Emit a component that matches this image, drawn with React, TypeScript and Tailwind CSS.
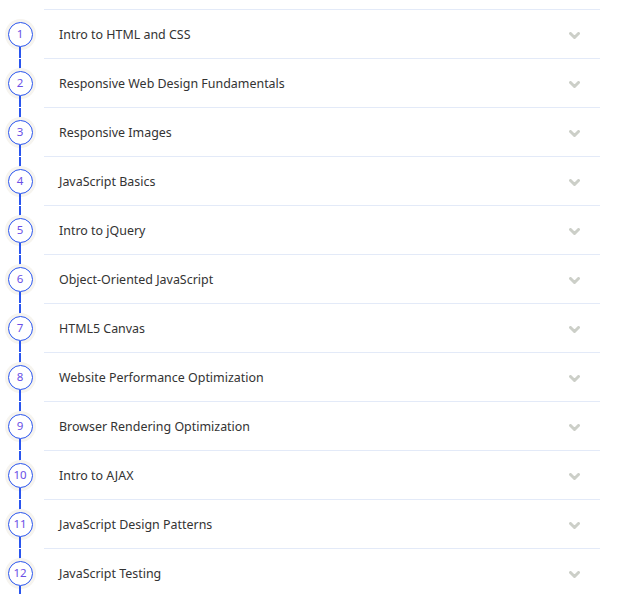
import React from "react";

const items = [
  "Intro to HTML and CSS",
  "Responsive Web Design Fundamentals",
  "Responsive Images",
  "JavaScript Basics",
  "Intro to jQuery",
  "Object-Oriented JavaScript",
  "HTML5 Canvas",
  "Website Performance Optimization",
  "Browser Rendering Optimization",
  "Intro to AJAX",
  "JavaScript Design Patterns",
  "JavaScript Testing",
];

function Chevron() {
  return (
    <svg width="11" height="8" viewBox="0 0 11 8" className="mt-[2px]">
      <path d="M1.5 1.5 L5.5 5.5 L9.5 1.5" fill="none" stroke="#cccfc8" strokeWidth="3" strokeLinecap="round" strokeLinejoin="round" />
    </svg>
  );
}

export default function App() {
  return (
    <div
      className="w-[622px] h-[594px] overflow-hidden bg-white pt-[9px]"
      style={{ fontFamily: '"Noto Sans", "Open Sans", sans-serif' }}
    >
      <div className="flex flex-col">
        {items.map((t, i) => (
          <div key={i} className="flex h-[49px]">
            <div className="w-[40px] flex flex-col items-center shrink-0 pt-[1px]">
              <div className={`w-[1.5px] flex-1 ${i === 0 ? "bg-transparent" : "bg-[#2a55ee]"}`} />
              <div className="w-[25px] h-[25px] rounded-full border-[1.5px] border-[#2a55ee] bg-white shadow-[0_0_0_3px_#f6f4ef] flex items-center justify-center text-[11.5px] text-[#6a4fe6] leading-none shrink-0">
                {i + 1}
              </div>
              <div className="w-[1.5px] flex-1 bg-[#2a55ee]" />
            </div>
            <div className="ml-[4px] w-[556px] border-t border-[#e3eaf8] flex items-center justify-between pl-[15px] pr-[20px] pt-[2px]">
              <span className="text-[12.45px] text-[#333333]">{t}</span>
              <Chevron />
            </div>
          </div>
        ))}
      </div>
    </div>
  );
}
